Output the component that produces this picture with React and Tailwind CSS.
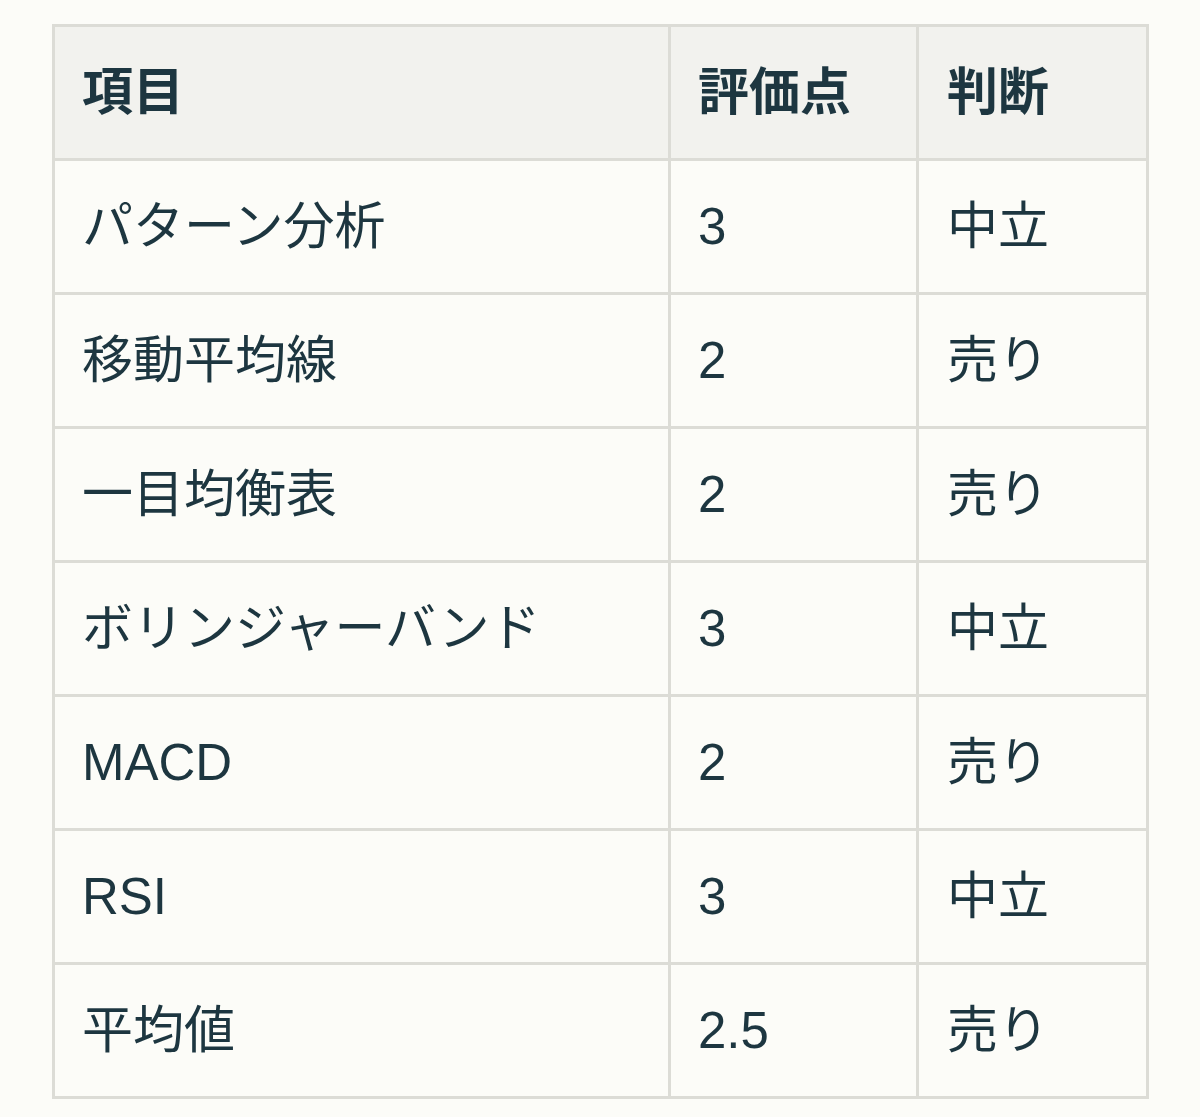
import React from "react";

const rows = [
  ["パターン分析", "3", "中立"],
  ["移動平均線", "2", "売り"],
  ["一目均衡表", "2", "売り"],
  ["ボリンジャーバンド", "3", "中立"],
  ["MACD", "2", "売り"],
  ["RSI", "3", "中立"],
  ["平均値", "2.5", "売り"],
];

export default function App() {
  return (
    <div
      className="min-h-[1117px] w-[1200px] bg-[#fcfcf8] pt-[24px] pl-[52px] text-[#1d3640]"
      style={{ fontFamily: '"Liberation Sans", "Noto Sans CJK JP", sans-serif' }}
    >
      <table className="table-fixed border-collapse w-[1094px] text-[51px] leading-none">
        <colgroup>
          <col className="w-[616px]" />
          <col className="w-[248px]" />
          <col className="w-[230px]" />
        </colgroup>
        <thead>
          <tr className="h-[134px] bg-[#f2f2ee]">
            <th className="border-[3px] border-[#dcdcd6] pl-[27px] text-left font-bold">項目</th>
            <th className="border-[3px] border-[#dcdcd6] pl-[27px] text-left font-bold">評価点</th>
            <th className="border-[3px] border-[#dcdcd6] pl-[28px] text-left font-bold">判断</th>
          </tr>
        </thead>
        <tbody>
          {rows.map((r, i) => (
            <tr key={i} className="h-[134px]">
              <td className="border-[3px] border-[#dcdcd6] pl-[27px]">{r[0]}</td>
              <td className="border-[3px] border-[#dcdcd6] pl-[27px]">{r[1]}</td>
              <td className="border-[3px] border-[#dcdcd6] pl-[28px]">{r[2]}</td>
            </tr>
          ))}
        </tbody>
      </table>
    </div>
  );
}
